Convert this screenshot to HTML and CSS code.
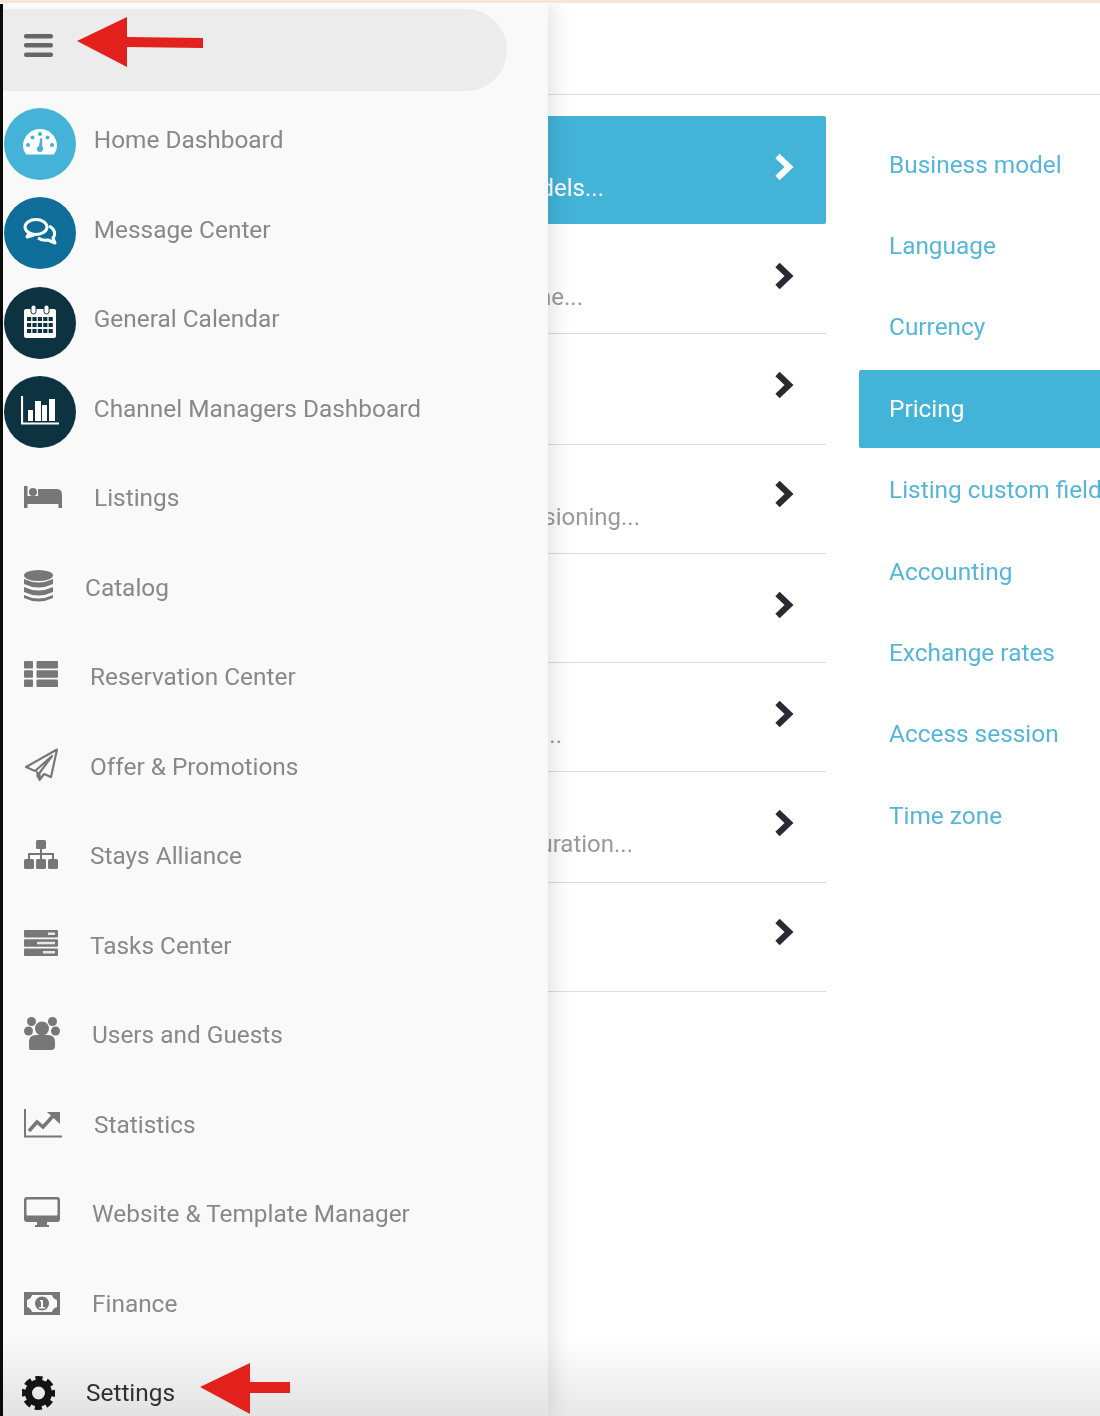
FILE: index.html
```html
<!DOCTYPE html>
<html lang="en">
<head>
<meta charset="utf-8">
<title>Settings</title>
<link rel="stylesheet" href="styles.css">
</head>
<body>
<div class="topline"></div>
<div class="page">
  <main class="main">
    <header class="main-head"></header>
    <div class="columns">
      <ul class="steps">
        <li class="step active"><span class="desc d1">Business models...</span><svg class="chev" viewBox="0 0 20 28"><path d="M3.500 3L15 14 3.500 25"/></svg></li>
        <li class="step"><span class="desc d2">Name, time zone...</span><svg class="chev" viewBox="0 0 20 28"><path d="M3.500 3L15 14 3.500 25"/></svg></li>
        <li class="step tall"><span class="desc"></span><svg class="chev" viewBox="0 0 20 28"><path d="M3.500 3L15 14 3.500 25"/></svg></li>
        <li class="step"><span class="desc d4">Provisioning...</span><svg class="chev chev-up" viewBox="0 0 20 28"><path d="M3.500 3L15 14 3.500 25"/></svg></li>
        <li class="step"><span class="desc"></span><svg class="chev" viewBox="0 0 20 28"><path d="M3.500 3L15 14 3.500 25"/></svg></li>
        <li class="step"><span class="desc d6">Options...</span><svg class="chev" viewBox="0 0 20 28"><path d="M3.500 3L15 14 3.500 25"/></svg></li>
        <li class="step tall"><span class="desc d7">Configuration...</span><svg class="chev" viewBox="0 0 20 28"><path d="M3.500 3L15 14 3.500 25"/></svg></li>
        <li class="step"><span class="desc"></span><svg class="chev chev-up" viewBox="0 0 20 28"><path d="M3.500 3L15 14 3.500 25"/></svg></li>
      </ul>
      <ul class="sub">
        <li class="sub-item">Business model</li>
        <li class="sub-item">Language</li>
        <li class="sub-item">Currency</li>
        <li class="sub-item current"><span class="sub-pill">Pricing</span></li>
        <li class="sub-item">Listing custom fields</li>
        <li class="sub-item">Accounting</li>
        <li class="sub-item">Exchange rates</li>
        <li class="sub-item">Access session</li>
        <li class="sub-item">Time zone</li>
      </ul>
    </div>
  </main>

  <aside class="side">
    <div class="side-head">
      <svg class="burger" viewBox="0 0 29 23"><rect y="0" width="29" height="4.500" rx="2"/><rect y="9" width="29" height="4.500" rx="2"/><rect y="18.500" width="29" height="4.500" rx="2"/></svg>
    </div>
    <nav class="nav">
      <a class="row round"><span class="disc c1"><svg class="di" width="34" height="26" viewBox="0 0 34 26"><path fill="#fff" d="M3 25.500Q0 21 0 17A17 17 0 0 1 34 17Q34 21 31 25.500Z"/><g fill="#45b3d8"><circle cx="5" cy="16" r="2"/><circle cx="9.500" cy="8.500" r="2"/><circle cx="17" cy="5" r="2"/><circle cx="24.500" cy="8.500" r="2"/><circle cx="29" cy="16" r="2"/><circle cx="17" cy="20" r="3"/><path d="M15.500 19l2-10h1.500l.5 11z"/></g></svg></span><span class="label">Home Dashboard</span></a>
      <a class="row round"><span class="disc c2"><svg class="di" width="34" height="27" viewBox="0 0 34 27"><g fill="none" stroke="#fff" stroke-width="3" stroke-linejoin="round"><ellipse cx="13" cy="9" rx="11" ry="7.500"/><path d="M6 15l-2 4 7-2"/><path d="M26 8c6 3 7 8 4 12l2 5-7-3c-4 1-7 0-10-2"/></g></svg></span><span class="label">Message Center</span></a>
      <a class="row round"><span class="disc c3"><svg class="di" width="32" height="33" viewBox="0 0 32 33"><rect y="4" width="32" height="29" rx="2" fill="#fff"/><rect x="7" y="0" width="5" height="9" rx="2.500" fill="#fff" stroke="#0d3340"/><rect x="20" y="0" width="5" height="9" rx="2.500" fill="#fff" stroke="#0d3340"/><g fill="none" stroke="#0d3340" stroke-width="4" stroke-dasharray="4.200 1.200"><path d="M3 14H29"/><path d="M3 20H29"/><path d="M3 26H29"/></g></svg></span><span class="label">General Calendar</span></a>
      <a class="row round"><span class="disc c3"><svg class="di" width="38" height="29" viewBox="0 0 38 29"><path d="M1 0V27.500H38" fill="none" stroke="#fff" stroke-width="2.200"/><g fill="#fff"><rect x="7" y="14" width="5" height="11"/><rect x="14" y="5" width="6" height="20"/><rect x="21" y="9" width="5" height="16"/><rect x="28" y="3" width="6" height="22"/></g></svg></span><span class="label">Channel Managers Dashboard</span></a>
      <a class="row"><svg class="ico" width="38" height="22" viewBox="0 0 38 22"><path d="M0 0H3.500V10H38V22H34.500V18H3.500V22H0Z"/><circle cx="9" cy="6" r="4"/><path d="M14 3H33Q38 3 38 9V11H14Z"/></svg><span class="label">Listings</span></a>
      <a class="row"><svg class="ico" width="29" height="33" viewBox="0 0 29 33"><ellipse cx="14.500" cy="5.500" rx="14.500" ry="5.500"/><path d="M0 9Q14.500 16 29 9V14Q14.500 21 0 14Z"/><path d="M0 17Q14.500 24 29 17V22Q14.500 29 0 22Z"/><path d="M0 25Q14.500 32 29 25V28Q14.500 35 0 28Z"/></svg><span class="label">Catalog</span></a>
      <a class="row"><svg class="ico ico-list" width="34" height="26" viewBox="0 0 34 26"><rect width="9" height="7.500" rx="1"/><rect x="12.500" width="21.500" height="7.500" rx="1"/><rect y="9.250" width="9" height="7.500" rx="1"/><rect x="12.500" y="9.250" width="21.500" height="7.500" rx="1"/><rect y="18.500" width="9" height="7.500" rx="1"/><rect x="12.500" y="18.500" width="21.500" height="7.500" rx="1"/></svg><span class="label">Reservation Center</span></a>
      <a class="row"><svg class="ico" width="34" height="34" viewBox="0 0 34 34"><path d="M33 1.500L2 19l9 4L28 8 15.500 25v7l4.500-6 7 3z" fill="none" stroke="#777" stroke-width="2.200" stroke-linejoin="round"/><path d="M12 22l3.500 3v7l-3-3z"/></svg><span class="label">Offer &amp; Promotions</span></a>
      <a class="row"><svg class="ico" width="34" height="29" viewBox="0 0 34 29"><rect x="12" width="10" height="9" rx="1.500"/><path d="M16 8h2v5h12v7h-2v-5H18v5h-2v-5H6v5H4v-7h12z"/><rect y="19" width="10" height="10" rx="1.500"/><rect x="12" y="19" width="10" height="10" rx="1.500"/><rect x="24" y="19" width="10" height="10" rx="1.500"/></svg><span class="label">Stays Alliance</span></a>
      <a class="row"><svg class="ico ico-server" width="34" height="26" viewBox="0 0 34 26"><rect width="34" height="7.500" rx="1"/><rect y="9.300" width="34" height="7.500" rx="1"/><rect y="18.500" width="34" height="7.500" rx="1"/><g fill="#e8e8e8"><rect x="24" y="2.500" width="7" height="2.500"/><rect x="13" y="11.800" width="18" height="2.500"/><rect x="19" y="21" width="12" height="2.500"/></g></svg><span class="label">Tasks Center</span></a>
      <a class="row"><svg class="ico" width="36" height="33" viewBox="0 0 36 33"><circle cx="7.500" cy="4.500" r="4.500"/><circle cx="28.500" cy="4.500" r="4.500"/><circle cx="4.500" cy="14" r="4.500"/><circle cx="31.500" cy="14" r="4.500"/><circle cx="18" cy="11.500" r="7"/><path d="M5 32V25Q5 18 12 18H24Q31 18 31 25V29Q31 33 27 33H9Q5 33 5 32Z"/></svg><span class="label">Users and Guests</span></a>
      <a class="row"><svg class="ico" width="38" height="29" viewBox="0 0 38 29"><path d="M1 0V27.500H38" fill="none" stroke="#777" stroke-width="2"/><path d="M5 22l8-9 6 5 10-11" fill="none" stroke="#777" stroke-width="3.500"/><path d="M23 3H36V15Z"/></svg><span class="label">Statistics</span></a>
      <a class="row"><svg class="ico ico-desk" width="36" height="30" viewBox="0 0 36 30"><path d="M3 0H33Q36 0 36 3V22Q36 25 33 25H23V28H25V30H11V28H13V25H3Q0 25 0 22V3Q0 0 3 0Z"/><rect x="2.500" y="2.500" width="31" height="16" rx="1" fill="#f9f9f9"/></svg><span class="label">Website &amp; Template Manager</span></a>
      <a class="row"><svg class="ico ico-flat" width="36" height="23" viewBox="0 0 36 23"><rect width="36" height="23"/><path d="M8 3H28Q29 7 33 8V15Q29 16 28 20H8Q7 16 3 15V8Q7 7 8 3Z" fill="#f9f9f9"/><circle cx="18" cy="11.500" r="7"/><path d="M16 8h3v7h2v1.500h-6V15h2V9.500h-1z" fill="#f9f9f9"/></svg><span class="label">Finance</span></a>
      <a class="row dark"><svg class="cog" width="33" height="34" viewBox="0 0 33 34"><circle cx="16.500" cy="17" r="10" fill="none" stroke="#151515" stroke-width="7"/><circle cx="16.500" cy="17" r="14.500" fill="none" stroke="#151515" stroke-width="5" stroke-dasharray="7 4.390" stroke-dashoffset="3.500"/></svg><span class="label">Settings</span></a>
    </nav>
  </aside>

  <div class="fade"></div>

  <svg class="arrow arrow-top" width="127" height="50" viewBox="0 0 127 50"><path d="M0 24L50 0V20L126 21V31L50 30V50Z"/></svg>
  <svg class="arrow arrow-bottom" width="91" height="51" viewBox="0 0 91 51"><path d="M0 24L50 0V19H90V30H50V51Z"/></svg>
</div>
</body>
</html>
```
FILE: styles.css
```css
* { box-sizing: border-box; }
html, body { margin: 0; height: 100%; overflow: hidden; background: #fff; }
body { font-family: Roboto, "Liberation Sans", sans-serif; filter: blur(0.45px); }
ul { list-style: none; margin: 0; padding: 0; }

.topline { height: 4px; background: #fff; border-top: 3px solid #f4e7d8; }
.page { position: relative; height: 1412px; overflow: hidden; }

/* main content, underneath the drawer */
.main-head { height: 91px; border-bottom: 1px solid #dedede; }
.columns { display: grid; grid-template-columns: 826px 1fr; column-gap: 33px; padding-top: 21px; }

.step { display: flex; justify-content: flex-end; align-items: flex-start; height: 109px; border-bottom: 1px solid #dcdcdc; padding-right: 32.500px; position: relative; }
.step.tall { height: 111px; }
.step.active { background: #43b3d8; color: #fff; border-bottom: 0; height: 108px; margin-bottom: 1px; border-radius: 2px; }
.chev { width: 20px; height: 28px; margin-top: 37px; flex: none; }
.chev-up { margin-top: 35px; }
.chev path { fill: none; stroke: #2a2a33; stroke-width: 6.200; }
.active .chev path { stroke: #fff; }
.desc { position: absolute; top: 58px; right: 222px; font-size: 24px; line-height: 28px; color: #9a9a9a; white-space: nowrap; }
.active .desc { color: #fff; }
.d2 { right: 243px; }
.d4 { right: 186px; }
.d6 { right: 264px; }
.d7 { right: 193px; top: 57.500px; }

.sub { padding-top: 7.500px; }
.sub-item { height: 81.400px; display: flex; align-items: center; padding-left: 30px; font-size: 24.400px; color: #56b6d9; white-space: nowrap; }
.sub-item.current { padding-left: 0; color: #fff; }
.sub-pill { display: flex; align-items: center; width: 100%; height: 78px; margin-top: 1px; padding-left: 30px; background: #43b3d8; border-radius: 2px 0 0 2px; }

/* drawer */
.side { position: absolute; left: 0; top: 0; bottom: 0; width: 548px; background: #f9f9f9; border-left: 3px solid #0c0c0c; box-shadow: 4px 0 22px rgba(0,0,0,.13); padding-top: 5px; }
.side-head { width: 504px; height: 82px; background: #ececec; border-radius: 0 41px 41px 0; display: flex; align-items: center; padding-left: 21px; }
.burger { width: 29px; height: 23px; fill: #666; margin-bottom: 9px; }

.nav { margin-top: 3.750px; }
.row { display: flex; align-items: center; height: 89.500px; padding-left: 21px; }
.round { padding-left: 0.750px; }
.disc { width: 72px; height: 72px; border-radius: 50%; display: flex; align-items: center; justify-content: center; margin: 8px 18px 0 0; flex: none; }
.c1 { background: #45b3d8; }
.c2 { background: #0f6e99; }
.c3 { background: #0d3340; }
.di { margin-bottom: 3px; }
.ico { fill: #777; margin: 0 32px 2px 0; flex: none; }
.ico-list { margin-bottom: 6px; }
.ico-server { margin-bottom: 5px; }
.ico-desk { margin-bottom: 4px; }
.ico-flat { margin-bottom: 0; }
.cog { margin: 0 31px 0 -2px; flex: none; }
.label { font-size: 24.400px; color: #888; white-space: nowrap; }
.dark .label { color: #333; }

.fade { position: absolute; left: 0; right: 0; bottom: 0; height: 78px; background: linear-gradient(to bottom, rgba(0,0,0,0), rgba(0,0,0,.09)); pointer-events: none; }

.arrow { position: absolute; fill: #e2201c; }
.arrow-top { left: 77px; top: 13px; }
.arrow-bottom { left: 200px; top: 1359px; }
```
